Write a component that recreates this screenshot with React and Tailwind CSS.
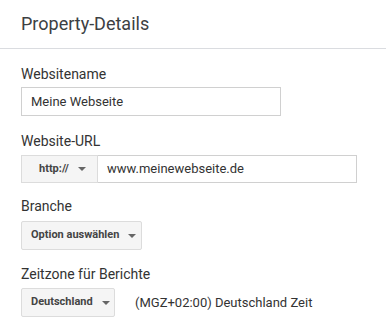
export default function App() {
  const Arrow = () => (
    <svg width="8" height="4" viewBox="0 0 8 4" className="ml-[9px] shrink-0">
      <path d="M0 0 L8 0 L4 4 Z" fill="#666" />
    </svg>
  );

  return (
    <div className="w-[386px] h-[336px] bg-white text-[#333] font-['Roboto',sans-serif] overflow-hidden">
      {/* Header */}
      <div className="h-[49px] border-b border-[#dadce0] px-[21px] pt-[12px]">
        <h1 className="text-[18px] leading-[24px] text-[#3c4043]">Property-Details</h1>
      </div>

      <div className="px-[21px]">
        {/* Websitename */}
        <div className="mt-[15px] text-[14px] leading-[20px]">Websitename</div>
        <div className="mt-[3px] w-[260px] h-[29px] border border-[#d0d0d0] flex items-center px-[9px] text-[13px]">
          Meine Webseite
        </div>

        {/* Website-URL */}
        <div className="mt-[15px] text-[14px] leading-[20px]">Website-URL</div>
        <div className="mt-[4px] w-[336px] h-[28px] flex">
          <div className="w-[77px] h-full bg-[#f5f5f5] border border-[#dcdcdc] flex items-center pl-[17px] text-[11px] font-bold text-[#444]">
            http://
            <Arrow />
          </div>
          <div className="flex-1 h-full border border-l-0 border-[#d0d0d0] flex items-center px-[9px] text-[13px]">
            www.meinewebseite.de
          </div>
        </div>

        {/* Branche */}
        <div className="mt-[13px] text-[14px] leading-[20px]">Branche</div>
        <div className="mt-[5px] w-[121px] h-[29px] bg-[#f5f5f5] border border-[#dcdcdc] rounded-[2px] flex items-center pl-[9px] text-[11px] font-bold text-[#444]">
          Option auswählen
          <Arrow />
        </div>

        {/* Zeitzone */}
        <div className="mt-[14px] text-[14px] leading-[20px]">Zeitzone für Berichte</div>
        <div className="mt-[4px] flex items-center">
          <div className="w-[94px] h-[29px] bg-[#f5f5f5] border border-[#dcdcdc] rounded-[2px] flex items-center pl-[9px] text-[11px] font-bold text-[#444]">
            Deutschland
            <Arrow />
          </div>
          <div className="ml-[20px] text-[13px]">(MGZ+02:00) Deutschland Zeit</div>
        </div>
      </div>
    </div>
  );
}
